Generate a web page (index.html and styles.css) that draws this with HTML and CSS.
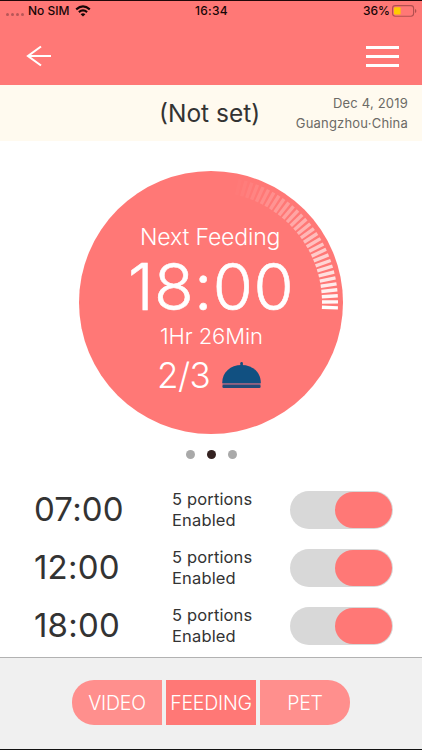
FILE: index.html
```html
<!DOCTYPE html>
<html lang="en">

<head>
  <meta charset="UTF-8">
  <meta name="viewport" content="width=device-width, initial-scale=1.0">
  <title>Feeding</title>
  <link rel="stylesheet" href="styles.css">
</head>

<body>
  <div class="app">
    <header class="header">
      <div class="status">
        <div class="status-left">
          <span class="signal"><i></i><i></i><i></i><i></i></span>
          <span class="carrier">No SIM</span>
          <svg class="wifi" width="16" height="12" viewBox="0 0 16 12">
            <g fill="none" stroke="#160606" stroke-width="2.1">
              <path d="M1.2 4.4Q8-1.6 14.8 4.4" />
              <path d="M3.9 7.1Q8 3.5 12.1 7.1" />
            </g>
            <path d="M8 11.6L5.6 9.2Q8 7.2 10.4 9.2Z" fill="#160606" />
          </svg>
        </div>
        <span class="clock">16:34</span>
        <div class="status-right">
          <span class="percent">36%</span>
          <svg class="battery" width="25" height="12" viewBox="0 0 25 12">
            <rect x=".6" y=".6" width="21" height="10.6" rx="2.6" fill="none" stroke="#b24f4f" stroke-width="1.1" />
            <rect x="2" y="2.2" width="6.6" height="7.4" rx="1" fill="#ffcc00" />
            <path d="M23 4v4q1.4-.6 1.4-2T23 4z" fill="#b24f4f" />
          </svg>
        </div>
      </div>
      <div class="navbar">
        <svg class="back" width="26" height="22" viewBox="0 0 26 22">
          <path d="M15 1.5L2 11l13 9.5M2 11h23" fill="none" stroke="#fff" stroke-width="2.1" />
        </svg>
        <div class="menu"><i></i><i></i><i></i></div>
      </div>
    </header>

    <div class="info">
      <span class="info-name">(Not set)</span>
      <div class="info-meta">
        <span class="info-date">Dec 4, 2019</span>
        <span class="info-place">Guangzhou·China</span>
      </div>
    </div>

    <main class="main">
      <div class="dial">
        <svg class="ticks" data-target="ticks" viewBox="-132 -132 264 264"></svg>
        <div class="dial-label">Next Feeding</div>
        <div class="dial-time">18:00</div>
        <div class="dial-left">1Hr 26Min</div>
        <div class="dial-count">
          <span class="dial-meals">2/3</span>
          <svg class="dish" width="39" height="27" viewBox="0 0 39 27">
            <g fill="#115081">
              <rect x="18.3" y="0" width="2.6" height="5" rx="1.2" />
              <path d="M.2 21C.2 10 8.5 3 19.5 3S38.8 10 38.8 21z" />
            </g>
            <rect x=".4" y="21" width="38.2" height="1.8" fill="#8e6383" />
            <rect x=".4" y="22.8" width="38.2" height="3.2" rx="1.2" fill="#254a78" />
          </svg>
        </div>
      </div>
      <div class="dots"><i></i><i class="active"></i><i></i></div>

      <ul class="meals">
        <li class="meal">
          <span class="meal-time">07:00</span>
          <div class="meal-text">5 portions<br>Enabled</div>
          <div class="toggle"><i></i></div>
        </li>
        <li class="meal">
          <span class="meal-time">12:00</span>
          <div class="meal-text">5 portions<br>Enabled</div>
          <div class="toggle"><i></i></div>
        </li>
        <li class="meal">
          <span class="meal-time">18:00</span>
          <div class="meal-text">5 portions<br>Enabled</div>
          <div class="toggle"><i></i></div>
        </li>
      </ul>
    </main>

    <footer class="tabs">
      <div class="tab tab-video">VIDEO</div>
      <div class="tab tab-feeding">FEEDING</div>
      <div class="tab tab-pet">PET</div>
    </footer>
  </div>
  <script>
    const ticks = document.querySelector("[data-target='ticks']");
    const count = 30;
    const step = 2.72;
    const lastAngle = 2.2;

    // fades out going counter-clockwise from the last tick
    for (let i = 0; i < count; i++) {
      const line = document.createElementNS("http://www.w3.org/2000/svg", "line");
      line.setAttribute("x1", 111);
      line.setAttribute("x2", 127);
      line.setAttribute("transform", `rotate(${lastAngle - i * step})`);
      line.setAttribute("opacity", Math.pow(1 - i / count, 1.2));
      ticks.appendChild(line);
    }
  </script>
</body>

</html>
```
FILE: styles.css
```css
* {
  box-sizing: border-box;
}

body {
  margin: 0;
  font-family: Inter, "Liberation Sans", sans-serif;
  color: #333;
}

.app {
  width: 422px;
  height: 750px;
  display: flex;
  flex-direction: column;
  background: #fff;
  border-top: 1px solid #210809;
  border-bottom: 1px solid #111;
  overflow: hidden;
  white-space: nowrap;
}

.header {
  height: 84px;
  background: #ff7876;
}

.status {
  height: 20px;
  display: grid;
  grid-template-columns: 1fr auto 1fr;
  align-items: center;
  padding: 0 5px 0 6px;
  font-size: 12px;
  font-weight: 500;
  line-height: 20px;
  color: #160606;
}

.clock {
  letter-spacing: 0.3px;
}

.status-left,
.status-right {
  display: flex;
  align-items: center;
}

.status-right {
  justify-content: flex-end;
  gap: 2px;
}

.signal {
  display: flex;
  gap: 2px;
  margin: 6px 4px 0 0;
}

.signal i {
  width: 3px;
  height: 3px;
  border-radius: 50%;
  background: #b85657;
}

.wifi {
  margin-left: 5px;
}

.navbar {
  height: 64px;
  display: flex;
  justify-content: space-between;
  padding: 24px 23px 0 26px;
}

.menu {
  width: 33px;
  padding-top: 1px;
  display: flex;
  flex-direction: column;
  gap: 6px;
}

.menu i {
  height: 3px;
  background: #fff;
}

.info {
  height: 56px;
  display: grid;
  grid-template-columns: 159px auto;
  background: #fffaef;
}

.info-name {
  grid-column: 2;
  font-size: 24.5px;
  line-height: 56px;
}

.info-meta {
  grid-column: 3;
  padding: 8px 14px 0 0;
  display: flex;
  flex-direction: column;
  align-items: flex-end;
  font-size: 13px;
  letter-spacing: 0.2px;
  line-height: 20px;
  color: #6c6a66;
}

.main {
  flex: 1;
  padding-top: 30px;
}

.dial {
  position: relative;
  width: 264px;
  height: 263px;
  margin: 0 0 0 79px;
  padding-top: 52px;
  border-radius: 50%;
  background: #ff7876;
  color: #fff;
  font-weight: 300;
}

.ticks {
  position: absolute;
  inset: 0;
}

.ticks line {
  stroke: #fff;
  stroke-width: 3.4px;
}

.dial-label {
  padding-left: 61px;
  font-size: 23px;
  letter-spacing: -0.15px;
  line-height: 28px;
}

.dial-time {
  padding-left: 49px;
  font-size: 65px;
  letter-spacing: 0.4px;
  line-height: 72px;
  -webkit-text-stroke: 0.6px #fff;
}

.dial-left {
  padding-left: 81px;
  font-size: 22px;
  letter-spacing: -0.1px;
  line-height: 27px;
}

.dial-count {
  display: flex;
  padding-left: 78px;
  font-size: 35px;
  letter-spacing: -0.6px;
  line-height: 50px;
}

.dial-meals {
  width: 65px;
}

.dish {
  margin-top: 12px;
}

.dots {
  display: flex;
  justify-content: center;
  gap: 12px;
  padding-top: 16px;
}

.dots i {
  width: 9px;
  height: 9px;
  border-radius: 50%;
  background: #a9a9a9;
}

.dots .active {
  background: #342221;
}

.meals {
  list-style: none;
  margin: 22px 0 0;
  padding: 0;
}

.meal {
  height: 58px;
  display: grid;
  grid-template-columns: 138px 118px 103px;
  align-items: center;
  padding-left: 34px;
}

.meal-time {
  padding-bottom: 2px;
  font-size: 33px;
  letter-spacing: 0.2px;
}

.meal-text {
  padding-bottom: 1px;
  font-size: 16.5px;
  letter-spacing: 0.15px;
  line-height: 21px;
}

.toggle {
  height: 38px;
  border-radius: 19px;
  background: #d8d8d8;
  padding: 1px;
  display: flex;
  justify-content: flex-end;
}

.toggle i {
  width: 57px;
  border-radius: 18px;
  background: #ff7876;
}

.tabs {
  height: 92px;
  display: flex;
  justify-content: center;
  gap: 4px;
  padding-top: 22px;
  background: #f0f0f0;
  border-top: 1px solid #b2b2b2;
}

.tab {
  width: 90px;
  height: 45px;
  background: #ff8f8d;
  color: #fff;
  font-size: 19.5px;
  font-weight: 300;
  letter-spacing: -0.2px;
  line-height: 46px;
  text-align: center;
}

.tab-video {
  border-radius: 22px 0 0 22px;
}

.tab-feeding {
  background: #ff7876;
}

.tab-pet {
  border-radius: 0 22px 22px 0;
}
```
